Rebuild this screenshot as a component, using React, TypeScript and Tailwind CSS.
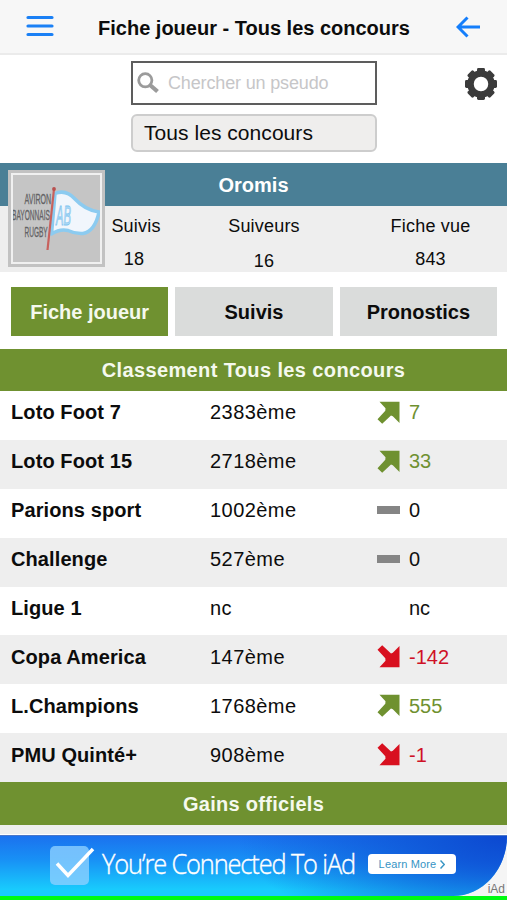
import React from 'react';

type Trend = 'up' | 'down' | 'flat' | 'none';

interface Ranking {
  name: string;
  rank: string;
  trend: Trend;
  delta: string;
}

const rankings: Ranking[] = [
  { name: 'Loto Foot 7', rank: '2383ème', trend: 'up', delta: '7' },
  { name: 'Loto Foot 15', rank: '2718ème', trend: 'up', delta: '33' },
  { name: 'Parions sport', rank: '1002ème', trend: 'flat', delta: '0' },
  { name: 'Challenge', rank: '527ème', trend: 'flat', delta: '0' },
  { name: 'Ligue 1', rank: 'nc', trend: 'none', delta: 'nc' },
  { name: 'Copa America', rank: '147ème', trend: 'down', delta: '-142' },
  { name: 'L.Champions', rank: '1768ème', trend: 'up', delta: '555' },
  { name: 'PMU Quinté+', rank: '908ème', trend: 'down', delta: '-1' },
];

const trendColor: Record<Trend, string> = {
  up: 'text-[#6f9130]',
  down: 'text-[#cf1126]',
  flat: 'text-[#111]',
  none: 'text-[#111]',
};

const trendIcon: Record<Trend, React.ReactNode> = {
  up: (
    <svg className="w-[23px] h-[23px]" viewBox="0 0 23 23" fill="#6f9130">
      <path d="M2.5 0.8H22.5V22L15.8 15.2L14 14.6L5.2 22.800L0.5 18.300L8.300 9.800L8.500 7.300Z" />
    </svg>
  ),
  down: (
    <svg className="w-[23px] h-[23px]" viewBox="0 0 23 23" fill="#d8101f">
      <path d="M2.5 22.2H22.5V1L15.8 7.8L14 8.4L5.2 0.2L0.5 4.7L8.300 13.200L8.500 15.700Z" />
    </svg>
  ),
  flat: <div className="w-[23px] h-2 bg-[#858585]" />,
  none: null,
};

const teeth = [0, 45, 90, 135, 180, 225, 270, 315];

const Gear: React.FC = () => (
  <svg className="w-8 h-8" viewBox="0 0 32 32">
    <circle cx="16" cy="16" r="10.5" fill="none" stroke="#3b3b3b" strokeWidth="6.5" />
    {teeth.map((angle) => (
      <rect key={angle} x="12" y="0" width="8" height="6" rx="1.4" fill="#3b3b3b" transform={`rotate(${angle} 16 16)`} />
    ))}
  </svg>
);

const ClubLogo: React.FC = () => (
  <svg className="w-full h-full" viewBox="0 0 87 87">
    <g fill="#626264" stroke="#626264" strokeWidth="0.300" fontFamily="Liberation Sans, sans-serif" fontSize="14.5">
      <text transform="translate(11.5 28.5) scale(0.49 1)">AVIRON</text>
      <text transform="translate(-1 45.2) scale(0.455 1)">BAYONNAIS</text>
      <text transform="translate(11.5 62) scale(0.45 1)">RUGBY</text>
    </g>
    <path d="M42 18.500Q53 14 62 24Q72 35 86 37Q82 56 70 58.500Q62 59 55 55.500Q47 53.500 38.500 59Z" fill="#f1f6fc" stroke="#8ccbf0" strokeWidth="3.500" strokeLinejoin="round" />
    <text transform="translate(43 50) scale(0.4 1)" fill="#b4dcf7" stroke="#7cc3ee" strokeWidth="0.900" fontFamily="Liberation Sans, sans-serif" fontSize="28" fontStyle="italic">AB</text>
    <path d="M41 14L34.500 75" stroke="#c8615d" strokeWidth="2.200" />
    <circle cx="41" cy="14" r="1.900" fill="#b8504e" />
  </svg>
);

const App: React.FC = () => {
  return (
    <div className="w-[507px] h-[900px] overflow-hidden bg-white text-[#0c0c0c] font-['Liberation_Sans',Arial,sans-serif] flex flex-col">
      {/* Nav bar */}
      <header className="h-[55px] shrink-0 bg-[#f7f7f7] border-b-2 border-[#ebebeb] flex items-center justify-between pl-[26px] pr-[27px]">
        <button className="-mt-px">
          <svg className="w-7 h-[22px]" viewBox="0 0 28 22" stroke="#1b80f5" strokeWidth="3.200" strokeLinecap="round">
            <path d="M2 2.500H26M2 11H26M2 19.500H26" />
          </svg>
        </button>
        <h1 className="text-[20px] font-bold whitespace-nowrap pt-[3px] pr-[2px]">Fiche joueur - Tous les concours</h1>
        <svg className="w-6 h-[22px]" viewBox="0 0 24 22" fill="none" stroke="#147efb" strokeWidth="3">
          <path d="M24 11H2M11.500 1.500L2 11L11.500 20.500" />
        </svg>
      </header>

      {/* Search */}
      <div className="h-[108px] shrink-0 pt-[6px] pl-[131px] pr-[10px] flex justify-between">
        <div className="w-[246px] flex flex-col gap-[9px]">
          <div className="h-[44px] border-2 border-[#5d5d5d] flex items-center pl-[4px] gap-[9px]">
            <svg className="w-[22px] h-[22px]" viewBox="0 0 22 22" fill="none" stroke="#9b9b9b">
              <circle cx="8.300" cy="8.300" r="6.600" strokeWidth="2.800" />
              <path d="M13 13L20.500 19.500" strokeWidth="4.200" />
            </svg>
            <span className="text-[18px] text-[#c6c6c8] tracking-[-0.150px]">Chercher un pseudo</span>
          </div>
          <div className="h-[38px] rounded-[6px] border-2 border-[#cdcdcd] bg-[#efeeed] flex items-center pl-[11px] text-[21px] tracking-[0.050px]">
            Tous les concours
          </div>
        </div>
        <div className="pt-[7px]">
          <Gear />
        </div>
      </div>

      {/* Player */}
      <section className="relative h-[109px] shrink-0 bg-[#eee]">
        <h2 className="h-[43px] bg-[#4a7f96] text-white text-[20px] font-bold flex items-center justify-center">Oromis</h2>
        <div className="grid grid-cols-[54px_202px_131px] pl-[109px] justify-start text-[18px] text-center whitespace-nowrap leading-[22px] pt-[9px] tracking-[0.200px]">
          <div className="flex flex-col gap-[11px]"><span>Suivis</span><span className="-ml-1">18</span></div>
          <div className="flex flex-col gap-[13px]"><span>Suiveurs</span><span>16</span></div>
          <div className="flex flex-col gap-[11px]"><span>Fiche vue</span><span>843</span></div>
        </div>
        <div className="absolute left-2 top-[7px] w-[97px] h-[97px] border-[3px] border-[#c2c2c2] bg-[#c5c5c5]">
          <div className="w-full h-full border-2 border-[#f0f0f0] overflow-hidden">
            <ClubLogo />
          </div>
        </div>
      </section>

      {/* Tabs */}
      <nav className="h-[77px] shrink-0 grid grid-cols-3 gap-[7px] pt-[15px] pb-[13px] pl-[11px] pr-[10px] text-[20px] font-bold">
        <button className="bg-[#6f9130] text-[#f5f9ee]">Fiche joueur</button>
        <button className="bg-[#dadcdb]">Suivis</button>
        <button className="bg-[#dadcdb]">Pronostics</button>
      </nav>

      <h2 className="h-[42px] shrink-0 bg-[#6f9130] text-[#f5f9ee] text-[20px] font-bold flex items-center justify-center tracking-[0.380px]">
        Classement Tous les concours
      </h2>
      <div className="h-[391px] shrink-0 grid grid-rows-8 text-[20px]">
        {rankings.map((item) => (
          <div key={item.name} className="grid grid-cols-[199px_167px_32px_1fr] items-center pl-[11px] pb-[6px] odd:bg-white even:bg-[#eee]">
            <span className="font-bold tracking-[0.100px]">{item.name}</span>
            <span className="tracking-[0.450px]">{item.rank}</span>
            <span>{trendIcon[item.trend]}</span>
            <span className={trendColor[item.trend]}>{item.delta}</span>
          </div>
        ))}
      </div>
      <h2 className="h-[43px] shrink-0 bg-[#6f9130] text-[#f5f9ee] text-[20px] font-bold flex items-center justify-center tracking-[0.300px]">
        Gains officiels
      </h2>
      <div className="h-[10px] shrink-0 bg-[#eee] border-b border-white" />

      {/* Ad banner */}
      <footer className="relative h-[65px] shrink-0 bg-[#f5f5f5] border-b-4 border-[#00fa12]">
        <div className="h-full rounded-br-[54px_60px] bg-[linear-gradient(180deg,#1b70ee_0%,#1890f5_40%,#18ccfd_90%)]">
          <div className="h-full border-t border-[#4b77c9] rounded-br-[54px_60px] bg-[radial-gradient(ellipse_270px_105px_at_100%_0%,#0c48d0_0%,#0f56d8_25%,transparent_100%)] flex items-center pl-[50px]">
            <svg className="w-[46px] h-[40px] shrink-0 -mt-[3px]" viewBox="0 0 46 40">
              <rect x="0" y="1" width="39" height="39" rx="5" fill="#8ccfff" fillOpacity="0.800" />
              <path d="M7 18.500L18 30.500L43 4" fill="none" stroke="#fff" strokeWidth="3.500" />
            </svg>
            <div className="ml-[6px] w-[254px] -mt-[4px]">
              <span className="inline-block origin-left scale-x-[0.94] text-[27px] font-light text-white whitespace-nowrap font-['Open_Sans',sans-serif] tracking-[-1.200px] [-webkit-text-stroke:0.400px_white]">You’re Connected To iAd</span>
            </div>
            <button className="ml-[12px] -mt-[4px] h-5 w-[88px] rounded-[4px] bg-white text-[#3694c4] text-[11px] flex items-center justify-center gap-1 whitespace-nowrap tracking-[0.150px]">
              Learn More
              <svg className="w-[5px] h-[9px]" viewBox="0 0 5 9" fill="none" stroke="#3694c4" strokeWidth="1.500"><path d="M0.500 0.500L4.300 4.500L0.500 8.500" /></svg>
            </button>
          </div>
        </div>
        <span className="absolute right-[2px] bottom-0 text-[12px] leading-[13px] text-[#777]">iAd</span>
      </footer>
    </div>
  );
};

export default App;
